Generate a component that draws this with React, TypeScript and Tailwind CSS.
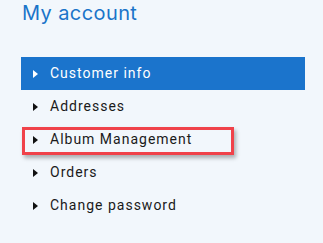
import React from "react";

const Caret = ({ color }: { color: string }) => (
  <svg width="5" height="8" viewBox="0 0 5 8" className="shrink-0">
    <path d="M0 0 L5 4 L0 8 Z" fill={color} />
  </svg>
);

const items = ["Customer info", "Addresses", "Album Management", "Orders", "Change password"];

export default function App() {
  return (
    <div className="w-[323px] h-[243px] bg-[#f2f7fc] overflow-hidden pl-[21px] pt-[0px]">
      <h1 className="text-[20px] leading-[26px] text-[#1a74c9] font-['Inter',sans-serif] tracking-[0.4px] pl-[1px]">
        My account
      </h1>
      <ul className="mt-[31px] w-[284px] font-['Roboto',sans-serif] text-[14px] tracking-[1px]">
        {items.map((it, i) => {
          const active = i === 0;
          const boxed = it === "Album Management";
          return (
            <li
              key={it}
              className={`h-[33px] flex items-center pl-[12px] gap-[12px] relative ${
                active ? "bg-[#1b74cc] text-white" : "text-[#1a1a1a]"
              }`}
            >
              <Caret color={active ? "#ffffff" : "#111111"} />
              <span>{it}</span>
              {boxed && (
                <div className="absolute left-[1px] top-[4px] w-[212px] h-[28px] border-[3px] border-[#f0424a] shadow-[2px_3px_4px_rgba(0,0,0,0.3)]" />
              )}
            </li>
          );
        })}
      </ul>
    </div>
  );
}
